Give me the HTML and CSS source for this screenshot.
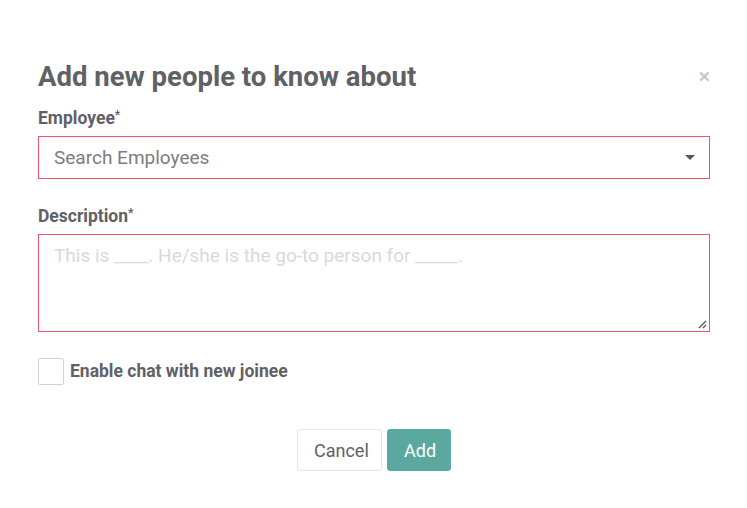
FILE: index.html
```html
<!DOCTYPE html>
<html>
<head>
<meta charset="utf-8">
<link rel="stylesheet" href="styles.css">
</head>
<body>
<div class="modal">
  <div class="header">
    <h1 class="title">Add new people to know about</h1>
    <span class="close">&#x2715;</span>
  </div>
  <div class="field">
    <label class="label">Employee<sup>*</sup></label>
    <div class="select">
      <span class="placeholder">Search Employees</span>
      <span class="caret"></span>
    </div>
  </div>
  <div class="field">
    <label class="label">Description<sup>*</sup></label>
    <div class="textarea">
      <span class="ta-placeholder">This is ____. He/she is the go-to person for _____.</span>
      <svg class="grip" width="10" height="10" viewBox="0 0 10 10"><path d="M9 2 L2 9 M9 6 L6 9" stroke="#555" stroke-width="1.3" fill="none"/></svg>
    </div>
  </div>
  <div class="check-row">
    <span class="checkbox"></span>
    <span class="check-label">Enable chat with new joinee</span>
  </div>
  <div class="actions">
    <button class="btn btn-cancel">Cancel</button>
    <button class="btn btn-add">Add</button>
  </div>
</div>
</body>
</html>
```
FILE: styles.css
```css
html, body {
  margin: 0;
  padding: 0;
  background: #fff;
  font-family: Roboto, "Liberation Sans", sans-serif;
  color: #5f6166;
}
.modal {
  width: 672px;
  padding: 58px 37px 0 38px;
}
.header {
  display: flex;
  align-items: center;
  justify-content: space-between;
  height: 38px;
}
.title {
  margin: 0;
  font-size: 27.5px;
  font-weight: 700;
  color: #5f6166;
  line-height: 38px;
}
.close {
  color: #c4c4c4;
  font-size: 15px;
  font-weight: 700;
  margin-right: -1px;
}
.field {
  margin-top: 12px;
}
.field + .field {
  margin-top: 27px;
}
.label {
  display: block;
  font-size: 17.5px;
  font-weight: 700;
  line-height: 20px;
  height: 20px;
}
.label sup {
  font-size: 12px;
  vertical-align: top;
  position: relative;
  top: -3px;
}
.select {
  margin-top: 8px;
  height: 41px;
  border: 1px solid #f0536a;
  display: flex;
  align-items: center;
  justify-content: space-between;
  padding: 0 14px 0 15px;
}
.placeholder {
  font-size: 19px;
  color: #7b7d80;
}
.caret {
  width: 0;
  height: 0;
  border-left: 5px solid transparent;
  border-right: 5px solid transparent;
  border-top: 5px solid #555;
}
.textarea {
  position: relative;
  margin-top: 8px;
  height: 96px;
  border: 1px solid #f0536a;
  padding: 0 15px;
}
.ta-placeholder {
  display: block;
  font-size: 19px;
  color: #d9d9d9;
  line-height: 20px;
  padding-top: 11px;
}
.grip {
  position: absolute;
  right: 2px;
  bottom: 2px;
}
.check-row {
  display: flex;
  align-items: center;
  margin-top: 26px;
}
.checkbox {
  width: 24px;
  height: 25px;
  border: 1px solid #d3d3d3;
  border-radius: 2px;
}
.check-label {
  margin-left: 6px;
  font-size: 17.5px;
  font-weight: 700;
  margin-top: -2px;
}
.actions {
  display: flex;
  justify-content: center;
  gap: 5px;
  margin-top: 44px;
  padding-left: 0;
}
.btn {
  height: 42px;
  font-family: Roboto, "Liberation Sans", sans-serif;
  font-size: 18px;
  border-radius: 3px;
  padding: 0 16px;
  cursor: pointer;
}
.btn-cancel {
  background: #fff;
  color: #5f6166;
  border: 1px solid #e6e6e6;
  width: 85px;
}
.btn-add {
  background: #5aa8a0;
  color: #fff;
  border: 1px solid #5aa8a0;
  width: 64px;
}
```
